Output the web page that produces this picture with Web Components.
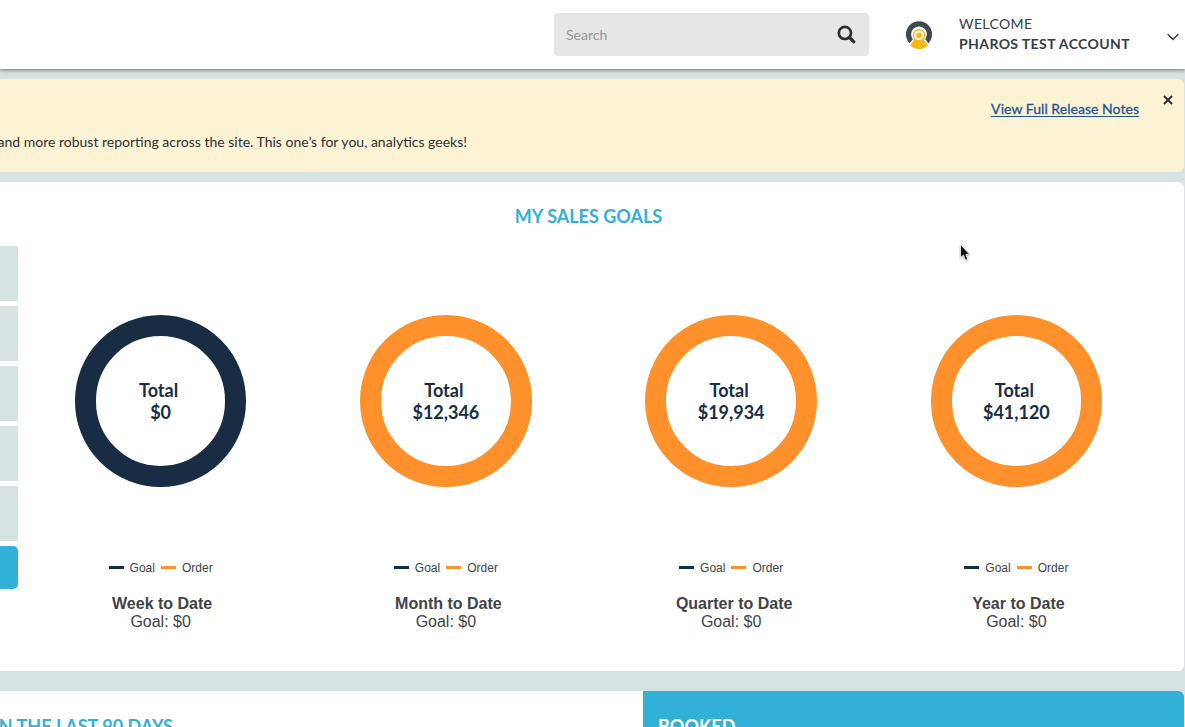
<!DOCTYPE html>
<html lang="en">
<head>
<meta charset="utf-8">
<title>Sales dashboard</title>
<style>
html,body{margin:0;height:100%;overflow:hidden}
body{background:#d7e2e3;font-family:Lato,"Liberation Sans",sans-serif;color:#2f3134}
</style>
</head>
<body>
<sales-dashboard></sales-dashboard>
<script>
function define(name, html) {
  const t = document.createElement('template');
  t.innerHTML = html;
  customElements.define(name, class extends HTMLElement {
    constructor() {
      super();
      this.attachShadow({ mode: 'open' }).appendChild(t.content.cloneNode(true));
    }
  });
}

define('search-box', `
<style>
:host{display:flex;align-items:center;justify-content:space-between;box-sizing:border-box;width:315px;height:43px;padding:0 13px 0 12px;border-radius:4px;background:#e6e6e6;color:#979797;font-size:14px;line-height:20px}
svg{display:block}
</style>
<span><slot></slot></span>
<svg width="19" height="19" viewBox="0 0 19 19" fill="none" stroke="#2d2d2d"><circle cx="7.9" cy="7.9" r="6.1" stroke-width="2.7"/><path d="M12.4 12.4 16.8 16.8" stroke-width="3.2" stroke-linecap="round"/></svg>
`);

define('account-menu', `
<style>
:host{display:flex;align-items:center;height:69px}
.logo{margin:1px 27px 0 0;width:26px;height:28px}
.who{width:208px;margin-top:-2px;color:#323d47;font-size:14px;line-height:20px}
.hi{letter-spacing:.38px}
.name{font-weight:700;letter-spacing:.4px}
svg{display:block;flex:none}
.chev{margin-top:5px}
</style>
<svg class="logo" viewBox="0 0 26 28">
<path d="M3.6 22.3A13 13 0 1 1 22.4 22.3L19.2 18.2A7.9 7.9 0 1 0 6.8 18.2Z" fill="#3d4853"/>
<path d="M8.6 18.2 4 24.4Q13 32 22 24.4L17.4 18.2Q13 21.6 8.6 18.2Z" fill="#fcb514"/>
<circle cx="13" cy="14.3" r="5.6" fill="#fff" stroke="#fcb514" stroke-width="1.4"/>
<path d="M8.6 18.4Q13 21.2 17.4 18.4L19 22H7Z" fill="#fcb514"/>
<circle cx="13" cy="14.3" r="4.2" fill="#fff"/>
<circle cx="13" cy="14.3" r="2.9" fill="#fcb514"/>
</svg>
<div class="who"><div class="hi"><slot name="greeting"></slot></div><div class="name"><slot></slot></div></div>
<svg class="chev" width="12" height="8" viewBox="0 0 12 8" fill="none" stroke="#323d47" stroke-width="1.4"><path d="M.6 1 6 6.4 11.4 1"/></svg>
`);

define('top-bar', `
<style>
:host{position:relative;display:flex;align-items:center;justify-content:flex-end;box-sizing:border-box;height:69px;padding-right:6px;background:#fff;box-shadow:0 1px 4px rgba(0,0,0,.5);gap:37px}
</style>
<slot></slot>
`);

define('release-banner', `
<style>
:host{display:block;box-sizing:border-box;height:93px;width:1184px;padding:15px 11px 0 0;background:#fcf2d4;border-radius:0 6px 6px 0;font-size:14px;line-height:20px}
.top{display:flex;justify-content:flex-end;gap:24px}
a{display:block;margin-top:5px;height:20px;color:#1f5596;text-decoration:underline;text-decoration-thickness:1px;text-underline-offset:2px;letter-spacing:.04px;-webkit-text-stroke:.3px}
svg{display:block;margin-top:1px}
.msg{display:flex;justify-content:flex-end;width:467px;margin-top:13px;white-space:nowrap;overflow:hidden;color:#2f3134}
</style>
<div class="top"><a><slot name="link"></slot></a>
<svg width="10" height="10" viewBox="0 0 10 10" stroke="#2d3237" stroke-width="2"><path d="M1 1 9 9M9 1 1 9"/></svg></div>
<div class="msg"><span><slot></slot></span></div>
`);

define('side-tabs', `
<style>
:host{display:flex;flex-direction:column;gap:5px;width:18px;padding-top:64px}
i{display:block;height:55px;background:#d7e2e3}
i.on{height:43px;background:#31b0d8;border-radius:0 5px 5px 0}
</style>
<i></i><i></i><i></i><i></i><i></i><i class="on"></i>
`);

define('goal-ring', `
<style>
:host{display:flex;flex-direction:column;align-items:center;font-family:"Liberation Sans",Arial,sans-serif;color:#404447}
.ring{display:flex;flex-direction:column;align-items:center;justify-content:center;box-sizing:border-box;width:171.5px;height:171.5px;padding-top:1px;border:21px solid var(--ring,#ff912d);border-radius:50%;font:700 18px/22px Lato,sans-serif;color:#182d44}
.total{padding-right:4px}
.legend{display:flex;align-items:center;margin-top:73px;height:16px;font-size:12px;line-height:16px}
.legend i{width:15px;height:3px;margin-right:6px;background:#182d44}
.legend i.o{margin-left:6px;background:#ff912d}
.name{margin:19px 0 0 var(--shift,5px);font-size:16px;font-weight:700;line-height:18px}
.goal{font-size:16px;line-height:18px}
</style>
<div class="ring"><span class="total">Total</span><span><slot></slot></span></div>
<div class="legend"><i></i>Goal<i class="o"></i>Order</div>
<div class="name"><slot name="name"></slot></div>
<div class="goal"><slot name="goal"></slot></div>
`);

define('goals-card', `
<style>
:host{display:flex;width:1184px;height:489px;background:#fff;border-radius:0 6px 6px 0}
.main{width:1141px}
h2{margin:22px 0 0;text-align:center;font-size:18px;line-height:24px;font-weight:700;color:#31b0d8}
.rings{display:grid;grid-template-columns:repeat(4,1fr);margin-top:87px}
</style>
<side-tabs></side-tabs>
<div class="main"><h2><slot name="title"></slot></h2><div class="rings"><slot></slot></div></div>
`);

define('summary-row', `
<style>
:host{display:grid;grid-template-columns:643px 541px;height:36px;margin-top:20px;overflow:hidden;font-size:18px;font-weight:700;line-height:24px;white-space:nowrap}
div{box-sizing:border-box;height:60px;padding-top:23px}
.l{display:flex;justify-content:flex-end;padding-right:470px;background:#fff;color:#31b0d8}
.r{padding-left:15px;background:#31b0d8;color:#fff;border-radius:0 6px 0 0}
</style>
<div class="l"><slot name="recent"></slot></div><div class="r"><slot name="booked"></slot></div>
`);

define('mouse-pointer', `
<style>
:host{position:absolute;left:959px;top:243px}
svg{display:block;filter:drop-shadow(0 1px 1px rgba(0,0,0,.3))}
</style>
<svg width="13" height="20" viewBox="0 0 13 20"><path d="M1.5 1.5V14.8L4.4 12.1 6.5 17.2 8.8 16.2 6.8 11.4H10.8Z" fill="#111" stroke="#fff" stroke-width=".8"/></svg>
`);

define('sales-dashboard', `
<style>
:host{display:block;position:relative;width:1185px;height:727px;overflow:hidden}
release-banner{margin:10px 0}
</style>
<top-bar><search-box>Search</search-box><account-menu><span slot="greeting">WELCOME</span>PHAROS TEST ACCOUNT</account-menu></top-bar>
<release-banner><span slot="link">View Full Release Notes</span>and more robust reporting across the site. This one’s for you, analytics geeks!</release-banner>
<goals-card><span slot="title">MY SALES GOALS</span>
<goal-ring style="--ring:#182d44;--shift:3px">$0<span slot="name">Week to Date</span><span slot="goal">Goal: $0</span></goal-ring>
<goal-ring>$12,346<span slot="name">Month to Date</span><span slot="goal">Goal: $0</span></goal-ring>
<goal-ring style="--shift:6px">$19,934<span slot="name">Quarter to Date</span><span slot="goal">Goal: $0</span></goal-ring>
<goal-ring style="--shift:4px">$41,120<span slot="name">Year to Date</span><span slot="goal">Goal: $0</span></goal-ring>
</goals-card>
<summary-row><span slot="recent">IN THE LAST 90 DAYS</span><span slot="booked">BOOKED</span></summary-row>
<mouse-pointer></mouse-pointer>
`);
</script>
</body>
</html>
